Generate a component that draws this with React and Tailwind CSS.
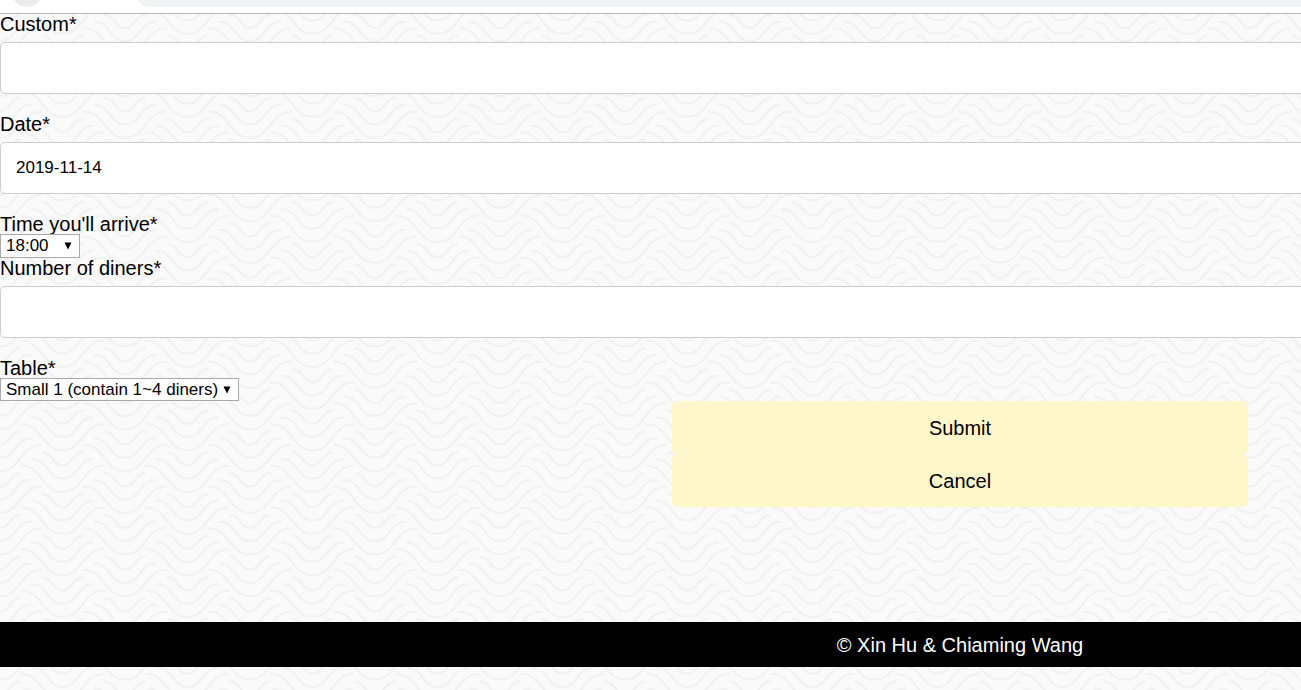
import React from "react";

const PERIOD = 125 / 3;

// Three nested troughs hanging from a point on the column's centre line.
function Troughs({ x, y }) {
  const arcs = [
    { half: 20, top: 0, depth: 13.2 },
    { half: 30.5, top: 6.7, depth: 19.6 },
    { half: 41, top: 13.4, depth: 26.2 },
  ];
  return arcs.map(({ half, top, depth }) => {
    const t = y + top;
    const b = t + depth;
    return (
      <path
        key={half}
        d={`M${x - half} ${t} C${x - half * 0.5} ${t} ${x - half * 0.5} ${b} ${x} ${b} C${x + half * 0.5} ${b} ${x + half * 0.5} ${t} ${x + half} ${t}`}
      />
    );
  });
}

function WavePattern() {
  const cells = [];
  for (let row = -2; row <= 3; row += 1) {
    const y = 21.7 + row * PERIOD;
    cells.push([62.5, y], [0, y + PERIOD / 2], [125, y + PERIOD / 2]);
  }
  return (
    <svg aria-hidden="true" className="absolute inset-0 -z-10 h-full w-full">
      <defs>
        <pattern id="waves" width="125" height="125" patternUnits="userSpaceOnUse">
          <g fill="none" stroke="#f1f1f1" strokeWidth="2.2" strokeLinecap="round">
            {cells.map(([x, y]) => (
              <Troughs key={`${x}-${y}`} x={x} y={y} />
            ))}
          </g>
        </pattern>
      </defs>
      <rect width="100%" height="100%" fill="url(#waves)" />
    </svg>
  );
}

function TextField({ id, label, defaultValue }) {
  return (
    <div className="mb-5 flex flex-col gap-2">
      <label htmlFor={id} className="leading-5">{label}</label>
      <input
        id={id}
        type="text"
        defaultValue={defaultValue}
        className="h-[52px] w-full rounded-[5px] border border-[#ccc] bg-white px-[15px] text-[17px] outline-none"
      />
    </div>
  );
}

function SelectField({ id, label, options, size }) {
  return (
    <div className="flex flex-col items-start">
      <label htmlFor={id} className="leading-5">{label}</label>
      <div className={`relative ${size}`}>
        <select
          id={id}
          className="block h-full w-full appearance-none border border-[#a9a9a9] bg-white pr-4 pl-[5px] text-[17px] leading-5 outline-none"
        >
          {options.map((o) => (
            <option key={o}>{o}</option>
          ))}
        </select>
        <svg
          aria-hidden="true"
          viewBox="0 0 8 8"
          className="pointer-events-none absolute top-2 right-2 h-2 w-2"
        >
          <path d="M0.5 0.5h7L4 7.5z" fill="#000" />
        </svg>
      </div>
    </div>
  );
}

export default function App() {
  return (
    <div className="min-h-screen overflow-hidden bg-white font-['Liberation_Sans',Arial,sans-serif] text-xl text-black">
      <div className="flex h-[14px] items-start gap-[94px] overflow-hidden border-b border-[#b6b6b6] pl-3">
        <div className="-mt-[23px] h-[30px] w-[30px] shrink-0 rounded-full bg-[#ebebeb]" />
        <div className="-mt-[21px] h-7 grow rounded-l-full bg-[#f1f3f4]" />
      </div>
      <div className="relative isolate min-h-[calc(100vh-14px)] w-full min-w-[1920px] bg-[#fafafa]">
        <WavePattern />
        <form onSubmit={(e) => e.preventDefault()}>
          <TextField id="custom" label="Custom*" />
          <TextField id="date" label="Date*" defaultValue="2019-11-14" />
          <SelectField
            id="time"
            label="Time you'll arrive*"
            options={["18:00", "19:00", "20:00"]}
            size="h-6 w-20"
          />
          <TextField id="diners" label="Number of diners*" />
          <SelectField
            id="table"
            label="Table*"
            options={["Small 1 (contain 1~4 diners)"]}
            size="h-[23px] w-[239px]"
          />
          <div className="mx-auto flex w-[30%] flex-col">
            <button type="submit" className="h-[53px] rounded-[5px] bg-[#fff7cc]">Submit</button>
            <button type="button" className="h-[53px] rounded-[5px] bg-[#fff7cc]">Cancel</button>
          </div>
        </form>
        <footer className="mt-[115px] flex h-[45px] items-center justify-center bg-black text-white">
          © Xin Hu &amp; Chiaming Wang
        </footer>
      </div>
    </div>
  );
}
